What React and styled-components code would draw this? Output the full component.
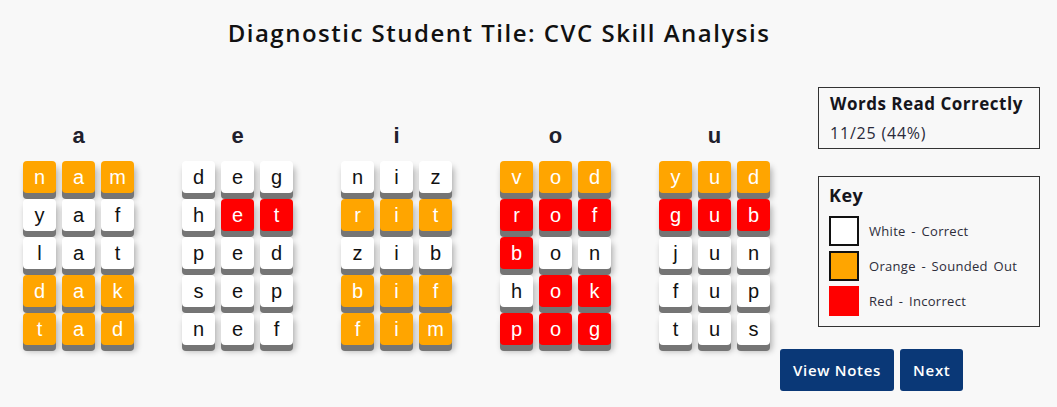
import React from "react";
import styled, { createGlobalStyle } from "styled-components";

const COLUMNS = [
  { vowel: "a", rows: [["nam", "OOO"], ["yaf", "WWW"], ["lat", "WWW"], ["dak", "OOO"], ["tad", "OOO"]] },
  { vowel: "e", rows: [["deg", "WWW"], ["het", "WRR"], ["ped", "WWW"], ["sep", "WWW"], ["nef", "WWW"]] },
  { vowel: "i", rows: [["niz", "WWW"], ["rit", "OOO"], ["zib", "WWW"], ["bif", "OOO"], ["fim", "OOO"]] },
  { vowel: "o", rows: [["vod", "OOO"], ["rof", "RRR"], ["bon", "RWW"], ["hok", "WRR"], ["pog", "RRR"]] },
  { vowel: "u", rows: [["yud", "OOO"], ["gub", "RRR"], ["jun", "WWW"], ["fup", "WWW"], ["tus", "WWW"]] },
];

const FILL = { W: "#ffffff", O: "#ffa500", R: "#ff0000" };

const KEY = [
  { tone: "W", label: "White - Correct" },
  { tone: "O", label: "Orange - Sounded Out" },
  { tone: "R", label: "Red - Incorrect" },
];

const GlobalStyle = createGlobalStyle`
  body {
    margin: 0;
    background: #f8f8f8;
    font-family: "Open Sans", "Noto Sans", sans-serif;
    color: #1c1c24;
  }
`;

const Page = styled.div`
  width: 1057px;
  height: 407px;
  overflow: hidden;
`;

const Title = styled.h1`
  width: 998px;
  margin: 0;
  padding-top: 18px;
  font-size: 24px;
  line-height: 30px;
  font-weight: 600;
  letter-spacing: 1.5px;
  text-align: center;
  color: #111;
`;

const Main = styled.div`
  display: flex;
  margin-top: 39px;
`;

const Board = styled.div`
  display: flex;
  gap: 48px;
  padding: 36px 0 0 23px;
`;

const Column = styled.div`
  display: flex;
  flex-direction: column;
  align-items: center;
  width: 111px;
`;

const Vowel = styled.div`
  font-family: "Liberation Sans", Arial, sans-serif;
  font-size: 22px;
  font-weight: 700;
  line-height: 26px;
  color: #20202c;
  margin-bottom: 12px;
`;

const Word = styled.div`
  display: flex;
  gap: 6px;
  margin-bottom: 6px;
`;

const Tile = styled.div`
  width: 33px;
  height: 32px;
  border-radius: 4px;
  background: ${(p) => FILL[p.$tone]};
  color: ${(p) => (p.$tone === "W" ? "#111" : "#fff")};
  box-shadow: 0 6px 0 #757575, 2px 6px 6px rgba(0, 0, 0, 0.3);
  font-family: "Liberation Sans", Arial, sans-serif;
  font-size: 20px;
  line-height: 32px;
  text-align: center;
`;

const Sidebar = styled.aside`
  display: flex;
  flex-direction: column;
  margin-left: 10px;
  width: 260px;
`;

const Panel = styled.section`
  align-self: flex-end;
  width: 222px;
  box-sizing: border-box;
  border: 1px solid #333;
  padding: ${(p) => p.$pad};
  margin-bottom: ${(p) => p.$gap}px;
`;

const PanelTitle = styled.h2`
  margin: 0;
  font-size: ${(p) => p.$size}px;
  line-height: 24px;
  font-weight: 700;
  letter-spacing: 0.5px;
  color: #15151c;
`;

const Score = styled.div`
  margin-top: 6px;
  font-size: 16px;
  line-height: 22px;
  letter-spacing: 0.8px;
  color: #2a2a3a;
`;

const KeyList = styled.ul`
  list-style: none;
  margin: 9px 0 0;
  padding: 0;
  display: flex;
  flex-direction: column;
  gap: 5px;
`;

const KeyRow = styled.li`
  display: flex;
  align-items: center;
  gap: 10px;
  font-size: 13px;
  letter-spacing: 0.3px;
  word-spacing: 2px;
  color: #2d2d3a;
`;

const Swatch = styled.span`
  width: 30px;
  height: 30px;
  box-sizing: border-box;
  background: ${(p) => FILL[p.$tone]};
  border: 2px solid ${(p) => (p.$tone === "R" ? FILL.R : "#111")};
`;

const Actions = styled.div`
  display: flex;
  gap: 6px;
`;

const Button = styled.button`
  height: 42px;
  padding: 0 13px;
  border: none;
  border-radius: 3px;
  background: #0a3877;
  color: #fff;
  font-family: "Open Sans", "Noto Sans", sans-serif;
  font-size: 15px;
  font-weight: 600;
  letter-spacing: 0.7px;
  cursor: pointer;
`;

export default function App() {
  return (
    <Page>
      <GlobalStyle />
      <Title>Diagnostic Student Tile: CVC Skill Analysis</Title>
      <Main>
        <Board>
          {COLUMNS.map((col) => (
            <Column key={col.vowel}>
              <Vowel>{col.vowel}</Vowel>
              {col.rows.map(([letters, tones]) => (
                <Word key={letters}>
                  {letters.split("").map((ch, i) => (
                    <Tile key={i} $tone={tones[i]}>
                      {ch}
                    </Tile>
                  ))}
                </Word>
              ))}
            </Column>
          ))}
        </Board>
        <Sidebar>
          <Panel $pad="4px 10px 4px 11px" $gap={27}>
            <PanelTitle $size={17}>Words Read Correctly</PanelTitle>
            <Score>11/25 (44%)</Score>
          </Panel>
          <Panel $pad="6px 10px 10px 10px" $gap={22}>
            <PanelTitle $size={18}>Key</PanelTitle>
            <KeyList>
              {KEY.map((k) => (
                <KeyRow key={k.tone}>
                  <Swatch $tone={k.tone} />
                  {k.label}
                </KeyRow>
              ))}
            </KeyList>
          </Panel>
          <Actions>
            <Button>View Notes</Button>
            <Button>Next</Button>
          </Actions>
        </Sidebar>
      </Main>
    </Page>
  );
}
